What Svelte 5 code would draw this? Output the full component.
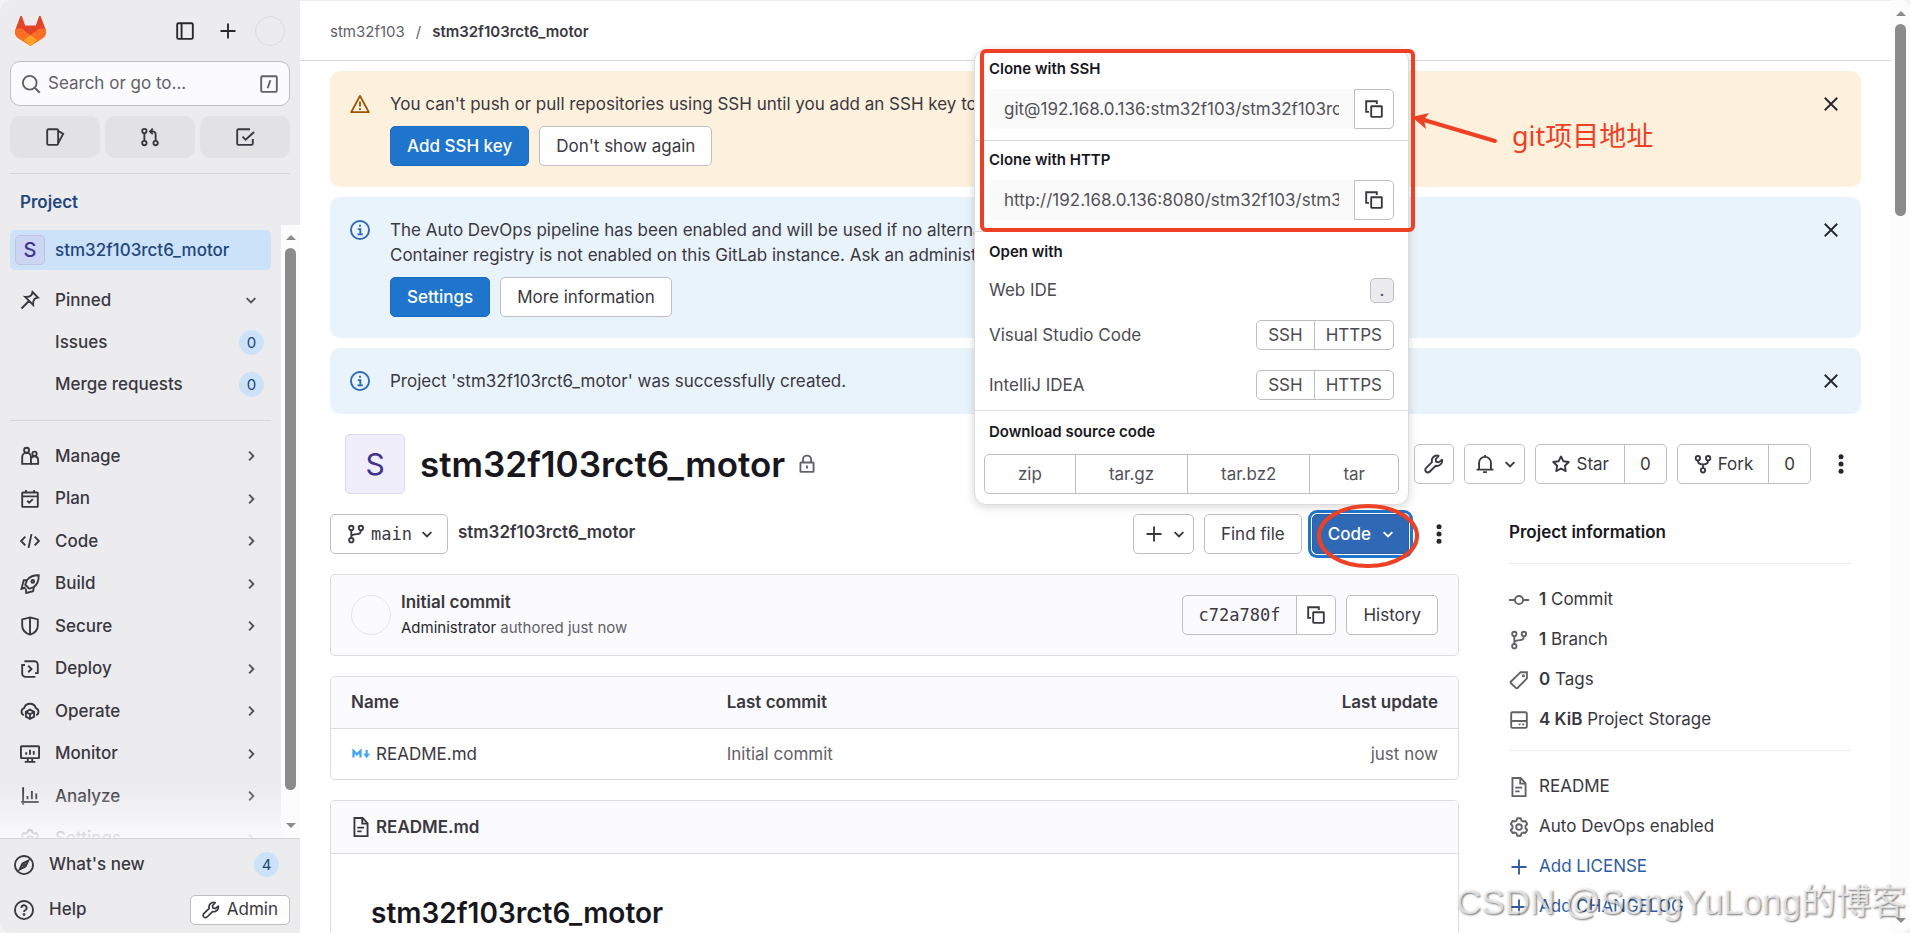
<script>
  const icons = {
    panel: '<rect x="1.75" y="1.75" width="12.5" height="12.5" rx="1"/><path d="M5.25 2v12"/>',
    plus: '<path d="M8 2v12M2 8h12"/>',
    search: '<circle cx="7" cy="7" r="5.5"/><path d="M11 11l4 4"/>',
    slash: '<rect x="1.75" y="1.75" width="12.5" height="12.5" rx="1"/><path d="M9.1 5l-2.2 6.4"/>',
    issues: '<rect x="1.75" y="1.75" width="8.75" height="12.5" rx="1"/><path d="M10.5 3l4 2.5-4 7.5"/>',
    merge: '<circle cx="3.5" cy="3.2" r="1.75"/><circle cx="3.5" cy="12.8" r="1.75"/><circle cx="12.5" cy="12.8" r="1.75"/><path d="M3.5 5v6M12.5 11V5.75A2.25 2.25 0 0 0 10.25 3.5H8.5M10.25 1.25L8 3.5l2.25 2.25"/>',
    todo: '<path d="M14.25 9.5v3.75a1 1 0 0 1-1 1H2.75a1 1 0 0 1-1-1V2.75a1 1 0 0 1 1-1H12M6 7.75L8.5 10.25 15.25 4"/>',
    pin: '<path d="M10 1.6L14.4 6c-1.4.2-2.4.7-3 1.5-.8.9-1 2.3-.9 4.4L4.1 5.5c2.1.1 3.5-.1 4.4-.9.8-.6 1.3-1.6 1.5-3zM7.2 8.8L1.2 14.8"/>',
    manage: '<circle cx="5.25" cy="3.4" r="2"/><path d="M1.75 14.25V8.9a3.5 3.5 0 0 1 7 0v5.35z"/><circle cx="11.6" cy="6.2" r="1.75"/><path d="M8.75 14.25h5.75V11a2.9 2.9 0 0 0-5.75-.4"/>',
    plan: '<rect x="1.75" y="2.75" width="12.5" height="11.5" rx=".5"/><path d="M2 5.9h12M4.75.75v2M11.25.75v2M5.75 9.4l1.6 1.6 2.9-2.9"/>',
    code: '<path d="M4.25 4.5L.9 8l3.35 3.5M11.75 4.5L15.1 8l-3.35 3.5M9.2 2.5L6.8 13.5"/>',
    build: '<path d="M15 1c-4.4-.1-7.4 1.1-9.4 4L4.2 8.6l3.2 3.2 3.6-1.4c2.9-2 4.1-5 4-9.4z"/><circle cx="10.2" cy="5.9" r="1.1"/><path d="M5.5 5H3L1.2 11.8l3.2-1M4.6 11.6l.4 3.6 5.5-1.4.6-3.3"/>',
    secure: '<path d="M8 1.1l6.25 1.6v4.8c0 3.4-2.3 6-6.25 7.4-3.95-1.4-6.25-4-6.25-7.4V2.7zM8 1.1v13.6"/>',
    deploy: '<path d="M3.5 1.75h8a2.75 2.75 0 0 1 2.75 2.75v6.75H12M12.25 14.25H4.5a2.75 2.75 0 0 1-2.75-2.75V4.75H4M6.6 5.4L9.2 8l-2.6 2.6"/>',
    operate: '<path d="M3 11.3a3 3 0 0 1 .3-5.6 4.9 4.9 0 0 1 9.4 0 3 3 0 0 1 .3 5.6"/><path d="M8 6.9l3.3 1.8v3.8L8 14.4l-3.3-1.9V8.7zM4.9 8.9L8 10.6l3.1-1.7M8 10.6v3.6"/>',
    monitor: '<rect x=".75" y="1.75" width="14.5" height="9.5" rx=".5"/><path d="M5 6.5v2M8 4.5v4M11 5.5v3M6.25 11.5v2.5M9.75 11.5v2.5M3.75 14.25h8.5"/>',
    analyze: '<path d="M2.5 1v14M1 12.75h14M6 8v2.5M9.5 4v6.5M13 6v4.5"/>',
    settings: '<path stroke-linejoin="round" d="M6.6 1h2.8l.6 1.9 1.2.7 1.95-.4 1.4 2.4L13.2 7.1v1.8l1.35 1.5-1.4 2.4-1.95-.4-1.2.7-.6 1.9H6.6L6 13.1l-1.2-.7-1.95.4-1.4-2.4L2.8 8.9V7.1L1.45 5.6l1.4-2.4 1.95.4L6 2.9z"/><circle cx="8" cy="8" r="2.25"/>',
    compass: '<circle cx="8" cy="8" r="7.25"/><path d="M11.5 4.5L9.2 9.2 4.5 11.5 6.8 6.8z"/><path d="M6.8 9.2l2.4-2.4"/>',
    help: '<circle cx="8" cy="8" r="7.25"/><path d="M5.9 6.3a2.1 2.1 0 1 1 3 1.9c-.6.3-.9.6-.9 1.3"/><circle cx="8" cy="11.6" r=".4"/>',
    wrench: '<path stroke-linejoin="round" d="M14.4 4.5l-2.6 2.2-2.1-.5-.4-2 2.4-2.7a4.1 4.1 0 0 0-5.3 5L1.6 11.3a1.9 1.9 0 0 0 2.9 2.9l4.9-4.8a4.1 4.1 0 0 0 5-4.9z"/>',
    bell: '<path d="M3.25 12.25V7a4.75 4.75 0 0 1 9.5 0v5.25M1.25 12.5h13.5M6.5 14.5h3M8 .75v1.5"/>',
    star: '<path stroke-linejoin="round" d="M8 1.9l1.9 3.9 4.3.6-3.1 3 .7 4.3L8 11.6l-3.8 2.1.7-4.3-3.1-3 4.3-.6z"/>',
    fork: '<circle cx="3.9" cy="3.3" r="1.75"/><circle cx="12.1" cy="3.3" r="1.75"/><circle cx="8" cy="13" r="1.75"/><path d="M3.9 5c0 2.4 1.2 3.4 4.1 3.4S12.1 7.4 12.1 5M8 8.4v2.85"/>',
    branch: '<circle cx="4.25" cy="3.1" r="1.75"/><circle cx="4.25" cy="12.9" r="1.75"/><circle cx="11.9" cy="3.1" r="1.75"/><path d="M4.25 5v6M11.9 4.9c0 2.4-.9 3.1-3.1 3.2-2.6.1-4 .4-4.5 1.7"/>',
    lock: '<rect x="2.75" y="6.75" width="10.5" height="7.5" rx=".5"/><path d="M4.75 6.75V4.5a3.25 3.25 0 0 1 6.5 0v2.25M8 9.25v2.25"/>',
    copy: '<path d="M4 10.25H1.75v-8.5h8.5V4"/><rect x="5.75" y="5.75" width="8.5" height="8.5" rx=".4"/>',
    doc: '<path d="M2.75.75h6.5l4 4.25v10.25H2.75zM9 1v4.25h4M5 8.5h5.5M5 11.5h3.5"/>',
    info: '<circle cx="8" cy="8" r="7.25"/><path d="M6.25 7.25H8.25v4M6 11.5h4.25M7.25 4.6h1.5"/>',
    warning: '<path stroke-linejoin="round" d="M8 1.5l7 13H1zM8 6v4M8 11.3v1.4"/>',
    commit: '<circle cx="8" cy="8" r="3.25"/><path d="M0 8h4.75M11.25 8H16"/>',
    tag: '<path d="M9.3 1.75h5v5L6.9 14.3a1 1 0 0 1-1.4 0L1.6 10.6a1 1 0 0 1 0-1.4z"/><circle cx="11.5" cy="4.6" r=".5"/>',
    disk: '<rect x="1.75" y="1.75" width="12.5" height="12.5" rx="1"/><path d="M2 8.75h12M7.8 11.5h1.4M10.6 11.5H12"/>',
    close: '<path d="M3 3l10 10M13 3L3 13"/>',
    down: '<path d="M4.5 6.5L8 9.9l3.5-3.4"/>',
    right: '<path d="M6.5 4.5L9.9 8l-3.4 3.5"/>',
    kebab: '<g fill="currentColor" stroke="none"><circle cx="8" cy="2.2" r="2"/><circle cx="8" cy="8" r="2"/><circle cx="8" cy="13.8" r="2"/></g>',
    markdown: '<path stroke-width="1.8" d="M2 10.8V5.5L4.8 8.3l2.8-2.8v5.3"/><path stroke-width="1.8" d="M12.5 4.8V9"/><path fill="currentColor" stroke="none" d="M9.7 7.8h5.6l-2.8 3.6z"/>',
  };

  const sections = [
    ['manage', 'Manage'], ['plan', 'Plan'], ['code', 'Code'], ['build', 'Build'],
    ['secure', 'Secure'], ['deploy', 'Deploy'], ['operate', 'Operate'],
    ['monitor', 'Monitor'], ['analyze', 'Analyze'], ['settings', 'Settings'],
  ];
  const clones = [
    { id: 'clone-ssh', label: 'Clone with SSH', url: 'git@192.168.0.136:stm32f103/stm32f103rct6_motor.git' },
    { id: 'clone-http', label: 'Clone with HTTP', url: 'http://192.168.0.136:8080/stm32f103/stm32f103rct6_motor.git' },
  ];
  const stats = [
    ['commit', '1', 'Commit'], ['branch', '1', 'Branch'], ['tag', '0', 'Tags'], ['disk', '4 KiB', 'Project Storage'],
  ];
  const project = 'stm32f103rct6_motor';
</script>

{#snippet icon(name, size = 20)}
  <svg class="icon" width={size} height={size} viewBox="0 0 16 16" fill="none" stroke="currentColor" stroke-width="1.5" aria-hidden="true">{@html icons[name]}</svg>
{/snippet}

{#snippet scrollbar(kind)}
  <div class="scrollbar {kind}" aria-hidden="true">
    <i class="arrow up"></i><i class="thumb"></i><i class="arrow dn"></i>
  </div>
{/snippet}

<div class="shell">
  <aside class="sidebar">
    <div class="brand">
      <svg class="logo" width="31" height="30" viewBox="0 0 31 30" aria-label="GitLab">
        <path fill="#e24329" d="M5.2.4c.4-.8 1.5-.8 1.8 0l3.2 9.2h10.6L24 .4c.3-.8 1.4-.8 1.8 0l5 13.5-15.3 9.9L.2 13.9z"/>
        <path fill="#fc6d26" d="M.2 13.9C1.7 12.3 6 12 8.5 13.7l7 5.2 7-5.2c2.5-1.7 6.8-1.4 8.3.2 1 3.4-.2 6.2-2.5 8L16.5 29.500c-.6.5-1.400.5-2 0L2.700 21.900c-2.300-1.800-3.500-4.600-2.500-8z"/>
        <path fill="#e24329" d="M8.5 13.7h14l-7 5.2z"/>
        <path fill="#fca326" d="M15.5 18.9l6.9 5.2-5.9 5.4c-.6.5-1.4.5-2 0l-5.9-5.4z"/>
      </svg>
      <button class="bare" aria-label="Collapse sidebar">{@render icon('panel')}</button>
      <button class="bare" aria-label="Create new">{@render icon('plus')}</button>
      <span class="avatar small"></span>
    </div>
    <button class="search">{@render icon('search')}<span>Search or go to...</span>{@render icon('slash')}</button>
    <div class="shortcuts">
      <button aria-label="Issues">{@render icon('issues')}</button>
      <button aria-label="Merge requests">{@render icon('merge')}</button>
      <button aria-label="To-do list">{@render icon('todo')}</button>
    </div>
    <h2 class="context">Project</h2>
    <div class="navwrap">
      <nav class="nav">
        <a class="row current" href="#project"><span class="letter">S</span><span class="label">{project}</span></a>
        <div class="rows pinned">
          <a class="row" href="#pinned">{@render icon('pin')}<span class="label">Pinned</span>{@render icon('down')}</a>
          <a class="row sub" href="#issues"><span class="label">Issues</span><span class="badge">0</span></a>
          <a class="row sub" href="#mrs"><span class="label">Merge requests</span><span class="badge">0</span></a>
        </div>
        <div class="rows menu">
          {#each sections as [glyph, name]}
            <a class="row" href="#{glyph}">{@render icon(glyph)}<span class="label">{name}</span>{@render icon('right')}</a>
          {/each}
        </div>
        <div class="fade"></div>
      </nav>
      {@render scrollbar('side')}
    </div>
    <div class="sidefoot">
      <a class="footrow" href="#new">{@render icon('compass')}<span class="label">What's new</span><span class="badge">4</span></a>
      <div class="footrow">
        {@render icon('help')}<a class="label" href="#help">Help</a>
        <button class="admin">{@render icon('wrench', 18)}Admin</button>
      </div>
    </div>
  </aside>

  <div class="page">
    <header class="crumbs"><a href="#group">stm32f103</a><span>/</span><a class="here" href="#project">{project}</a></header>
    <main>
      <section class="alert warn">
        {@render icon('warning')}
        <div class="body">
          <p>You can't push or pull repositories using SSH until you add an SSH key to your profile.</p>
          <div class="actions"><button class="btn primary">Add SSH key</button><button class="btn">Don't show again</button></div>
        </div>
        <button class="bare dismiss" aria-label="Dismiss">{@render icon('close')}</button>
      </section>
      <section class="alert">
        {@render icon('info')}
        <div class="body">
          <p>The Auto DevOps pipeline has been enabled and will be used if no alternative CI/CD configuration file is found.<br />Container registry is not enabled on this GitLab instance. Ask an administrator to enable it in order for Auto DevOps to work.</p>
          <div class="actions"><button class="btn primary">Settings</button><button class="btn">More information</button></div>
        </div>
        <button class="bare dismiss" aria-label="Dismiss">{@render icon('close')}</button>
      </section>
      <section class="alert">
        {@render icon('info')}
        <div class="body"><p>Project '{project}' was successfully created.</p></div>
        <button class="bare dismiss" aria-label="Dismiss">{@render icon('close')}</button>
      </section>

      <div class="titlebar">
        <span class="letter big">S</span>
        <h1>{project}</h1>
        <span class="private">{@render icon('lock')}</span>
        <div class="tools">
          <button class="btn square" aria-label="Admin">{@render icon('wrench')}</button>
          <button class="btn tight" aria-label="Notifications">{@render icon('bell')}{@render icon('down')}</button>
          <div class="group"><button class="btn">{@render icon('star')}Star</button><a class="btn" href="#stars">0</a></div>
          <div class="group"><button class="btn">{@render icon('fork')}Fork</button><a class="btn" href="#forks">0</a></div>
          <button class="bare kebab" aria-label="More actions">{@render icon('kebab')}</button>
        </div>
      </div>

      <div class="columns">
        <div class="files">
          <div class="filebar">
            <button class="btn caret mono">{@render icon('branch')}main{@render icon('down')}</button>
            <a class="path" href="#root">{project}</a>
            <div class="tools">
              <button class="btn tight" aria-label="Add">{@render icon('plus')}{@render icon('down')}</button>
              <button class="btn">Find file</button>
              <div class="codewrap">
                <button class="btn caret code">Code{@render icon('down')}</button>
                <svg class="ring" width="102" height="66" viewBox="0 0 102 66" aria-hidden="true"><ellipse cx="51" cy="33" rx="49" ry="30" /></svg>
                <div class="popup">
                  <div class="marked">
                    {#each clones as c}
                      <div class="clone">
                        <label for={c.id}>{c.label}</label>
                        <div class="field"><input id={c.id} readonly value={c.url} /><button class="btn square" aria-label="Copy URL">{@render icon('copy')}</button></div>
                      </div>
                    {/each}
                    <div class="redbox"></div>
                    <svg class="pointer" width="86" height="34" viewBox="0 0 86 34" aria-hidden="true"><path d="M83 29L12 8" /><path class="head" d="M0 5L17 1 12 8 14 17z" /></svg>
                    <span class="note">git项目地址</span>
                  </div>
                  <div class="openwith">
                    <h3>Open with</h3>
                    <div class="ide web"><span>Web IDE</span><kbd>.</kbd></div>
                    <div class="ide"><span>Visual Studio Code</span><div class="group mini"><button class="btn">SSH</button><button class="btn">HTTPS</button></div></div>
                    <div class="ide"><span>IntelliJ IDEA</span><div class="group mini"><button class="btn">SSH</button><button class="btn">HTTPS</button></div></div>
                  </div>
                  <div class="download">
                    <h3>Download source code</h3>
                    <div class="group formats"><button class="btn">zip</button><button class="btn">tar.gz</button><button class="btn">tar.bz2</button><button class="btn">tar</button></div>
                  </div>
                </div>
              </div>
              <button class="bare kebab" aria-label="More">{@render icon('kebab')}</button>
            </div>
          </div>

          <section class="card commit">
            <span class="avatar"></span>
            <div class="msg"><a href="#commit">Initial commit</a><p><b>Administrator</b> authored just now</p></div>
            <div class="group"><span class="btn hash">c72a780f</span><button class="btn square" aria-label="Copy commit SHA">{@render icon('copy')}</button></div>
            <button class="btn">History</button>
          </section>

          <div class="card">
            <table>
              <thead><tr><th>Name</th><th>Last commit</th><th>Last update</th></tr></thead>
              <tbody><tr><td><a class="file" href="#readme"><span class="md">{@render icon('markdown')}</span>README.md</a></td><td>Initial commit</td><td>just now</td></tr></tbody>
            </table>
          </div>

          <section class="card readme">
            <header>{@render icon('doc')}<a href="#readme">README.md</a></header>
            <h2>{project}</h2>
          </section>
        </div>

        <aside class="about">
          <h2>Project information</h2>
          <ul>
            {#each stats as [glyph, n, what]}
              <li>{@render icon(glyph)}<span><strong>{n}</strong> {what}</span></li>
            {/each}
          </ul>
          <ul>
            <li>{@render icon('doc')}<a href="#readme">README</a></li>
            <li>{@render icon('settings')}<a href="#devops">Auto DevOps enabled</a></li>
            <li class="add">{@render icon('plus')}<a href="#license">Add LICENSE</a></li>
            <li class="add">{@render icon('plus')}<a href="#changelog">Add CHANGELOG</a></li>
          </ul>
        </aside>
      </div>
    </main>
  </div>
  {@render scrollbar('outer')}
  <div class="watermark">CSDN @SongYuLong的博客</div>
</div>

<style>
  :global(body) { margin: 0; background: #f3f3f3; }
  * { box-sizing: border-box; }
  .shell { position: relative; display: flex; height: 100vh; overflow: hidden; border-radius: 10px; background: #fff; font: 17px/25px Inter, "Noto Sans CJK SC", sans-serif; color: #3a383f; }
  a { color: inherit; text-decoration: none; }
  h1, h2, h3, p, ul { margin: 0; padding: 0; }
  button { font: inherit; color: inherit; padding: 0; cursor: pointer; }
  .icon { flex: none; display: block; }
  .bare { display: flex; align-items: center; justify-content: center; border: 0; background: none; }
  .label { flex: 1; }

  .sidebar { flex: 0 0 300px; display: flex; flex-direction: column; background: #ececef; min-height: 0; }
  .brand { display: flex; align-items: center; height: 61px; padding: 0 15px; }
  .logo { margin-right: auto; }
  .brand .bare { width: 43px; height: 40px; color: #28272d; }
  .avatar { flex: none; width: 40px; height: 40px; border: 1px solid #dcdce0; border-radius: 50%; }
  .avatar.small { width: 30px; height: 30px; margin-left: 6px; }
  .search { display: flex; align-items: center; gap: 7px; height: 45px; margin: 0 10px; padding: 0 10px; border: 1px solid #bfbfc3; border-radius: 10px; background: #fbfafd; color: #626168; text-align: left; }
  .search span { flex: 1; }
  .shortcuts { display: grid; grid-template-columns: repeat(3, 1fr); gap: 5px; margin: 10px 10px 0; padding-bottom: 15px; border-bottom: 1px solid #d5d5d9; }
  .shortcuts button { display: flex; align-items: center; justify-content: center; height: 42px; border: 0; border-radius: 10px; background: #e2e2e5; }
  .context { margin: 16px 20px 10px; font-size: 17px; line-height: 25px; font-weight: 600; color: #23467b; }
  .navwrap { flex: 1; display: flex; min-height: 0; }
  .nav { position: relative; flex: 1; overflow: hidden; padding: 5px 10px 0; font-weight: 500; }
  .row { display: flex; align-items: center; gap: 15px; height: 40px; padding: 0 10px; border-radius: 5px; }
  .row.current { gap: 10px; padding: 0 5px; background: #cbe2f9; color: #23467b; }
  .row.sub { padding-left: 45px; padding-right: 7px; }
  .letter { flex: none; display: flex; align-items: center; justify-content: center; width: 30px; height: 30px; border: 1px solid #bfc3e0; border-radius: 5px; background: #cdd5f4; color: #41338c; font-size: 20px; }
  .rows { display: grid; grid-auto-rows: 1fr; align-items: center; }
  .rows .row > .icon:last-child { color: #535158; }
  .pinned { height: 127px; margin: 9px 0 14px; }
  .menu { height: 440px; padding-top: 14px; border-top: 1px solid #d5d5d9; }
  .badge { display: flex; align-items: center; justify-content: center; width: 25px; height: 25px; border-radius: 50%; background: #cbe2f9; color: #23467b; font-size: 15px; font-weight: 400; }
  .fade { position: absolute; left: 0; right: 0; bottom: 0; height: 50px; background: linear-gradient(rgba(251, 250, 253, 0), rgba(251, 250, 253, .9)); }
  .sidefoot { padding: 3px 10px 1px; border-top: 1px solid #d5d5d9; font-weight: 500; }
  .footrow { display: flex; align-items: center; gap: 15px; height: 45px; padding: 0 11px 0 4px; }
  .footrow + .footrow { padding-right: 0; }
  .admin { display: flex; align-items: center; gap: 7px; height: 30px; padding: 0 11px; border: 1px solid #bfbfc3; border-radius: 5px; background: #fff; font-weight: 400; }

  .scrollbar { flex: 0 0 19px; display: flex; flex-direction: column; align-items: center; background: #fcfcfc; }
  .thumb { width: 11px; border-radius: 6px; background: #8b8b8b; }
  .side .thumb { flex: 1; margin: 8px 0 33px; }
  .outer .thumb { height: 192px; margin: 8px 0 auto; }
  .arrow { border: 5px solid transparent; border-top: 0; border-bottom: 5px solid #8b8b8b; margin-top: 11px; }
  .side .arrow.up { margin-top: 10px; }
  .arrow.dn { border-bottom: 0; border-top: 5px solid #8b8b8b; margin: 0 0 10px; }

  .page { flex: 1; min-width: 0; border-top: 1px solid #ececec; }
  .crumbs { display: flex; align-items: center; gap: 11px; height: 60px; padding: 2px 30px 0; border-bottom: 1px solid #dcdcde; font-size: 15px; color: #626168; }
  .crumbs .here { color: #3a383f; font-weight: 600; }
  main { padding: 10px 30px 0; }
  .alert { display: flex; gap: 20px; margin-bottom: 10px; padding: 21px 20px 20px; border-radius: 10px; background: #e9f3fc; }
  .alert > .icon { margin-top: 2px; color: #2f68b4; }
  .alert.warn { background: #fdf1dd; }
  .alert.warn > .icon { color: #9e5400; }
  .body { flex: 1; }
  .actions { display: flex; gap: 10px; margin: 9px 0 1px; }
  .dismiss { width: 20px; height: 24px; color: #28272d; }
  .btn { display: flex; align-items: center; justify-content: center; gap: 5px; height: 40px; padding: 0 16px; border: 1px solid #bfbfc3; border-radius: 5px; background: #fff; white-space: nowrap; }
  .btn.primary { background: #1f75cb; border-color: #1b6cc0; color: #fff; font-weight: 500; }
  .titlebar .btn { padding: 0 15px; }
  .btn.square { width: 40px; padding: 0; }
  .btn.tight { padding: 0 4px 0 10px; }
  .btn.caret { padding: 0 10px 0 15px; }
  .group { display: flex; }
  .group .btn:not(:first-child) { margin-left: -1px; border-top-left-radius: 0; border-bottom-left-radius: 0; }
  .group .btn:not(:last-child) { border-top-right-radius: 0; border-bottom-right-radius: 0; }
  .tools { display: flex; gap: 10px; margin-left: auto; }
  .kebab { width: 40px; height: 40px; color: #28272d; }

  .titlebar { display: flex; align-items: center; margin: 20px 0; padding-left: 15px; }
  .letter.big { width: 60px; height: 60px; border-color: #dcd8ee; background: #f1eefc; font-size: 30px; }
  h1 { margin-left: 15px; font-size: 35px; line-height: 45px; font-weight: 600; color: #18171d; }
  .private { margin-left: 12px; color: #626168; }

  .columns { display: flex; gap: 50px; }
  .files { flex: 1; min-width: 0; }
  .filebar { display: flex; gap: 10px; margin-bottom: 20px; }
  .mono { font-family: "DejaVu Sans Mono", monospace; }
  .path { font-weight: 600; padding-top: 6px; }
  .codewrap { position: relative; }
  .btn.code { gap: 7px; border-color: #2f5ca0; background: #2f68b4; color: #fff; font-weight: 500; box-shadow: 0 0 0 1px #fff, 0 0 0 4px #1f75cb; }
  .ring { position: absolute; left: 5px; top: -11px; z-index: 3; pointer-events: none; fill: none; stroke: #ee4024; stroke-width: 4px; }

  .popup { position: absolute; right: 0; bottom: calc(100% + 9px); z-index: 2; width: 435px; border: 1px solid #dcdcde; border-radius: 12px; background: #fff; box-shadow: 0 2px 10px rgba(5, 5, 6, .16); }
  .marked { position: relative; }
  .clone { padding: 9px 14px 11px; border-bottom: 1px solid #dcdcde; }
  .clone label, h3 { display: block; font-size: 15px; line-height: 20px; font-weight: 600; color: #18171d; }
  .field { display: flex; margin-top: 10px; }
  .field input { flex: 1; min-width: 0; height: 40px; padding: 0 15px; border: 0; border-radius: 5px 0 0 5px; background: #fafafa; font: inherit; color: #535158; }
  .field .btn { border-radius: 0 5px 5px 0; }
  .redbox { position: absolute; inset: -1px -7px 0 5px; border: 4px solid #ee4024; border-radius: 6px; }
  .pointer { position: absolute; left: calc(100% + 4px); top: 62px; stroke: #ee4024; stroke-width: 4px; stroke-linecap: round; }
  .pointer .head { fill: #ee4024; stroke: none; }
  .note { position: absolute; left: calc(100% + 104px); top: 67px; font: 27px/38px "Noto Sans", "Noto Sans CJK SC", sans-serif; color: #ee4024; white-space: nowrap; }
  .openwith { padding: 10px 14px 10px; border-bottom: 1px solid #dcdcde; }
  .ide { display: flex; align-items: center; justify-content: space-between; height: 30px; margin-top: 20px; color: #4c4b51; }
  .ide.web { height: 25px; margin: 16px 0 -3px; }
  kbd { display: flex; justify-content: center; width: 24px; height: 25px; border: 1px solid #bfbfc3; border-radius: 5px; background: #ececef; font: inherit; line-height: 23px; }
  .mini .btn { height: 30px; padding: 0 11px; }
  .download { padding: 11px 9px 10px; }
  .download h3 { padding-left: 5px; }
  .formats { margin-top: 12px; color: #535158; }
  .formats .btn { flex: 1 1 auto; }

  .card { margin-bottom: 20px; border: 1px solid #dcdcde; border-radius: 5px; background: #fff; overflow: hidden; }
  .commit { display: flex; align-items: center; gap: 10px; height: 82px; padding: 0 20px; background: #fbfafd; }
  .commit .avatar { border-color: #e6e6ea; }
  .msg { flex: 1; }
  .msg a { font-weight: 600; }
  .msg p { font-size: 15px; color: #626168; }
  .msg b { font-weight: 400; color: #28272d; }
  .hash { background: #fbfafd; font-family: "DejaVu Sans Mono", monospace; }
  table { width: 100%; border-collapse: collapse; table-layout: fixed; }
  th { height: 51px; padding: 1px 20px 0; border-bottom: 1px solid #dcdcde; background: #fbfafd; text-align: left; font-weight: 600; }
  td { height: 51px; padding: 1px 20px 0; color: #626168; }
  th:last-child, td:last-child { text-align: right; }
  .file { display: flex; align-items: center; gap: 5px; color: #3a383f; }
  .md { color: #42a5f5; }
  .readme { border-radius: 5px 5px 0 0; margin: 0; }
  .readme header { display: flex; align-items: center; gap: 5px; height: 53px; padding: 0 20px; border-bottom: 1px solid #dcdcde; background: #fbfafd; font-weight: 600; }
  .readme h2 { padding: 40px; font-size: 28px; line-height: 38px; font-weight: 600; color: #18171d; }

  .about { flex: 0 0 352px; padding-right: 10px; }
  .about h2 { padding: 6px 0 18px; font-size: 17px; line-height: 25px; font-weight: 600; color: #18171d; }
  .about ul { display: grid; gap: 15px; padding: 23px 0 18px; border-top: 1px solid #ececef; list-style: none; }
  .about li { display: flex; align-items: center; gap: 10px; }
  .about .icon { color: #626168; }
  .about strong { font-weight: 600; }
  .about .add, .about .add .icon { color: #2f5ca0; }
  .watermark { position: absolute; right: 4px; bottom: 4px; z-index: 5; font: 35px/54px "Liberation Sans", "Noto Sans CJK SC", sans-serif; color: rgba(255, 255, 255, .7); text-shadow: 1px 1px 2px rgba(0, 0, 0, .55); white-space: nowrap; pointer-events: none; }
</style>
